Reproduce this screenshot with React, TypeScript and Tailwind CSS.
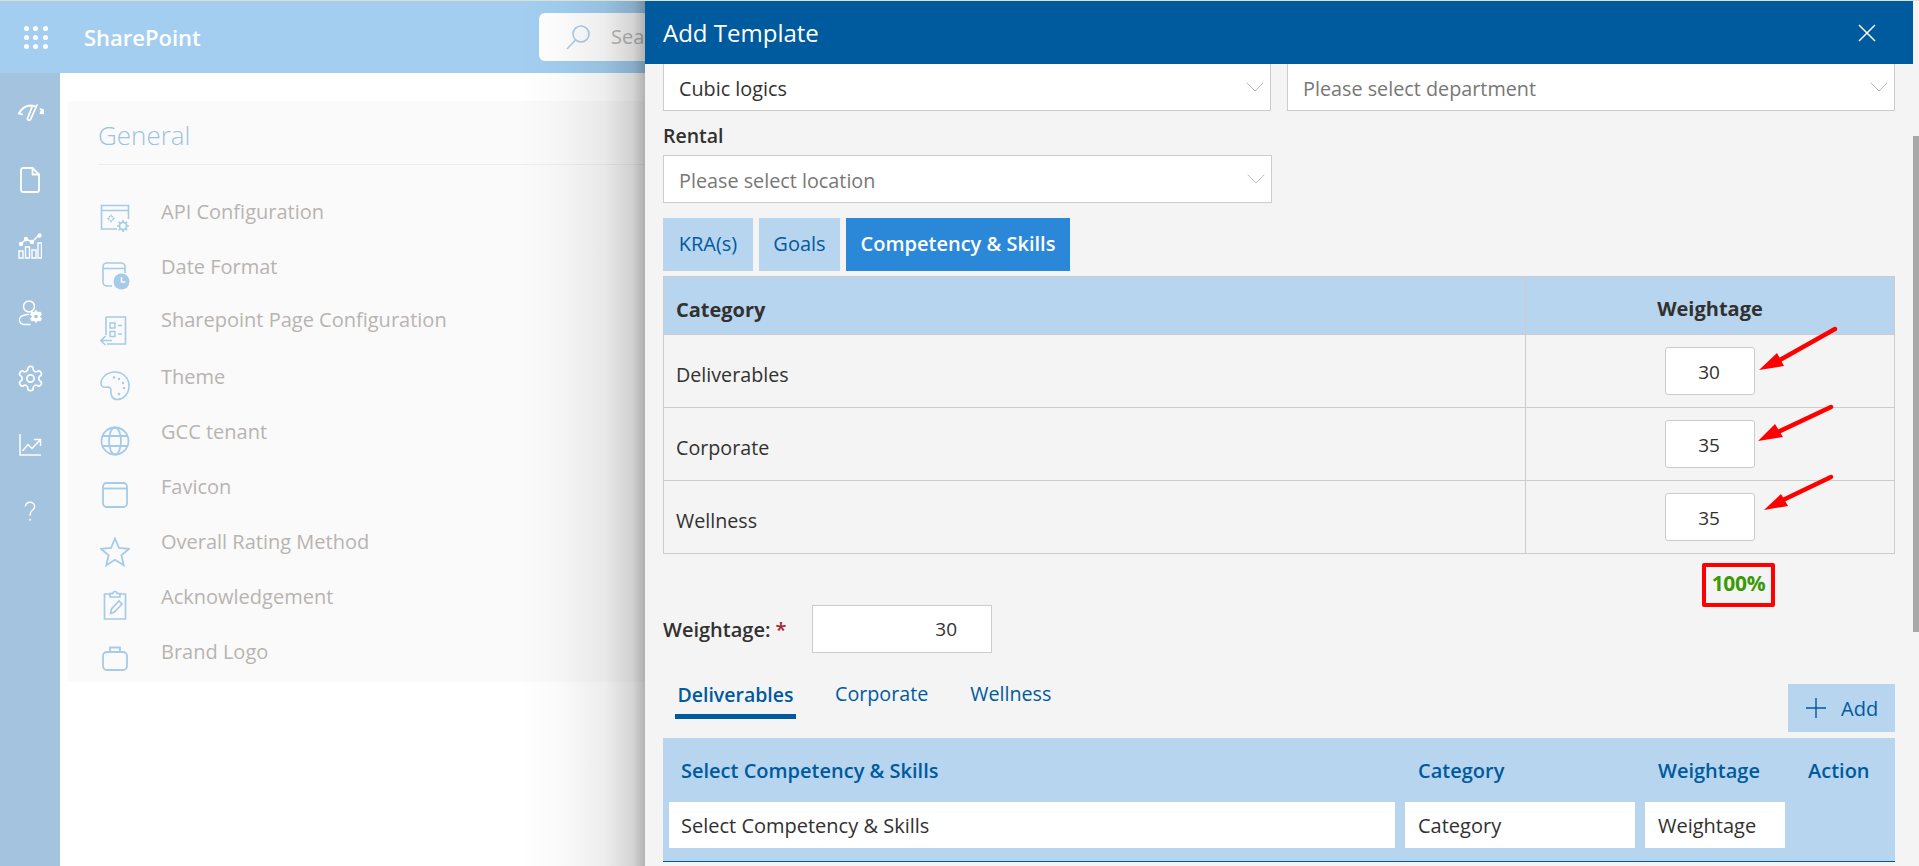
import React from "react";
import { ChevronDown } from "lucide-react";

const ic = { fill: "none", stroke: "#a5cbe8", strokeWidth: 1.6 };

function ItemIcon({ k }: { k: string }) {
  const common = { width: 30, height: 30, viewBox: "0 0 30 30", className: "shrink-0" };
  switch (k) {
    case "api":
      return (
        <svg {...common} {...ic}>
          <path d="M17 25H1.500V1.500h27V15M1.500 6.500h27" />
          <circle cx="11" cy="14.500" r="2.400" strokeWidth="1.400" strokeDasharray="2 .6" />
          <path d="M11 10.500v1.500M11 17v1.500M7 14.500h1.500M13.500 14.500H15" strokeWidth="1.200" />
          <circle cx="23" cy="22" r="3.600" strokeWidth="1.800" />
          <path d="M23 16v2.400M23 25.600V28M17 22h2.400M26.600 22H29M18.800 17.800l1.700 1.700M25.500 24.500l1.700 1.700M27.200 17.800l-1.700 1.700M20.500 24.500l-1.700 1.700" strokeWidth="1.600" />
        </svg>
      );
    case "date":
      return (
        <svg {...common} {...ic}>
          <path d="M12 25H7a4 4 0 0 1-4-4V6a4 4 0 0 1 4-4h14a4 4 0 0 1 4 4v6M3 7.500h22" />
          <circle cx="21.500" cy="20.500" r="8" fill="#a5cbe8" stroke="none" />
          <path d="M21.500 16v5h4" stroke="#fafafa" strokeWidth="1.500" />
        </svg>
      );
    case "page":
      return (
        <svg {...common} {...ic}>
          <path d="M6 1h19.500v27H7M6 1v18" />
          <path d="M10 7h5v5h-5zM10 15.500h5v5h-5zM18 9.500h4M18 18h4" strokeWidth="1.500" />
          <path d="M1 24.500h11M5.500 20l-4.500 4.500 4.500 4.500" />
        </svg>
      );
    case "theme":
      return (
        <svg {...common} {...ic}>
          <path d="M15 1C7 1 1 6.500 1 12.500c0 3 2.500 4 5 3.700 3-.3 5.500 0 5 4-.4 3.800 1 8.300 6 8.300 7 0 12-6.500 12-13.500C29 7 23 1 15 1z" />
          <g fill="#a5cbe8" stroke="none">
            <circle cx="14" cy="6.500" r="1.300" />
            <circle cx="19" cy="8" r="1.200" />
            <circle cx="23" cy="12" r="1.200" />
            <circle cx="24" cy="17" r="1.200" />
            <circle cx="19" cy="23" r="1.300" />
          </g>
        </svg>
      );
    case "globe":
      return (
        <svg {...common} {...ic} strokeWidth="1.800">
          <circle cx="15" cy="15" r="13.500" />
          <ellipse cx="15" cy="15" rx="6" ry="13.500" />
          <path d="M2.500 10h25M2.500 20h25" />
        </svg>
      );
    case "fav":
      return (
        <svg {...common} {...ic} strokeWidth="1.800">
          <rect x="3" y="3" width="24" height="24" rx="3.500" />
          <path d="M3 8.500h24" />
        </svg>
      );
    case "star":
      return (
        <svg {...common} {...ic} strokeWidth="1.800">
          <path d="M15 1.500l4 9.500 10 .8-7.600 6.500 2.300 10L15 22.800l-8.700 5.500 2.300-10L1 11.800l10-.8z" />
        </svg>
      );
    case "ack":
      return (
        <svg {...common} {...ic} strokeWidth="1.700">
          <path d="M10 4H4.500v25h21V4H20M10 7h10V3.500h-3a2 2 0 0 0-4 0h-3z" />
          <path d="M10.500 23.500l1-4.500 7.500-8 3 3-7.500 8z" />
        </svg>
      );
    default:
      return (
        <svg {...common} {...ic} strokeWidth="1.800">
          <rect x="3" y="8" width="24" height="18" rx="4" />
          <path d="M10 8V3.500h10V8" />
        </svg>
      );
  }
}

const items = [
  { t: "API Configuration", k: "api", h: "h-[55px]", m: "mt-[5px]" },
  { t: "Date Format", k: "date", h: "h-[53px]", m: "mt-[7px]" },
  { t: "Sharepoint Page Configuration", k: "page", h: "h-[57px]", m: "mt-[9px]" },
  { t: "Theme", k: "theme", h: "h-[55px]", m: "mt-[7px]" },
  { t: "GCC tenant", k: "globe", h: "h-[55px]", m: "mt-[7px]" },
  { t: "Favicon", k: "fav", h: "h-[55px]", m: "mt-[6px]" },
  { t: "Overall Rating Method", k: "star", h: "h-[55px]", m: "mt-[8px]" },
  { t: "Acknowledgement", k: "ack", h: "h-[55px]", m: "mt-[6px]" },
  { t: "Brand Logo", k: "brand", h: "h-[55px]", m: "mt-[5px]" },
];

function Rail() {
  const s = { fill: "none", stroke: "#fff", strokeWidth: 1.8, strokeLinecap: "round" as const, strokeLinejoin: "round" as const };
  return (
    <div className="flex w-[60px] shrink-0 flex-col items-center bg-[#a3c3de] pt-[25px]">
      <svg width="28" height="30" viewBox="0 0 28 30" {...s} className="mb-[39px]">
        <path d="M3 15.500C5.500 10.500 9.500 8 14 7.500c2 0 3.500 .2 5 .9M24.500 11c1.200 1.200 2 2.700 2.500 4.500" />
        <path d="M3 15.500l3 .9M26.500 11.500l-2 3.600h4z" />
        <path d="M21 7l-6.500 14.500c-.6 1.500-3.500 .8-3-1L16 9" />
      </svg>
      <svg width="20" height="26" viewBox="0 0 20 26" {...s} className="mb-[40px]">
        <path d="M3 1h9.500L19 7.500V23a2 2 0 0 1-2 2H3a2 2 0 0 1-2-2V3a2 2 0 0 1 2-2z" />
        <path d="M12.500 1v6.500H19" />
      </svg>
      <svg width="24" height="26" viewBox="0 0 24 26" {...s} strokeWidth="1.400" className="mb-[41px]">
        <path d="M1 18h4v7H1zM7.500 14h4v11h-4zM14 17h4v8h-4zM20 10h3.500v15H20z" strokeLinejoin="miter" />
        <path d="M3 11l5-5 6 3 7-7" />
        <circle cx="3" cy="11" r="1.500" fill="#fff" />
        <circle cx="8" cy="6" r="1.500" fill="#fff" />
        <circle cx="14" cy="9" r="1.500" fill="#fff" />
        <circle cx="21.500" cy="2.500" r="1.500" fill="#fff" />
      </svg>
      <svg width="25" height="26" viewBox="0 0 25 26" {...s} strokeWidth="1.500" className="mb-[38px]">
        <circle cx="11" cy="6.500" r="5.500" />
        <path d="M12 24.500H6.500a4.500 4.500 0 0 1-1-9 8 8 0 0 1 5-1" />
        <path d="M18 10.500l1.800 2 2.700-.3.900 2.500-1.800 1.800 1.800 1.800-.9 2.500-2.700-.3-1.800 2-1.800-2-2.700.3-.9-2.500 1.800-1.800-1.800-1.800.9-2.500 2.700.3z" fill="#fff" strokeWidth="1" />
        <circle cx="18" cy="16.500" r="1.800" fill="#a3c3de" stroke="none" />
      </svg>
      <svg width="29" height="29" viewBox="0 0 24 24" {...s} strokeWidth="1.400" className="mb-[40px]">
        <path d="M12.220 2h-.44a2 2 0 0 0-2 2v.18a2 2 0 0 1-1 1.730l-.43.25a2 2 0 0 1-2 0l-.15-.08a2 2 0 0 0-2.730.73l-.22.38a2 2 0 0 0 .73 2.730l.15.1a2 2 0 0 1 1 1.720v.51a2 2 0 0 1-1 1.740l-.15.090a2 2 0 0 0-.73 2.730l.22.38a2 2 0 0 0 2.730.73l.15-.08a2 2 0 0 1 2 0l.43.25a2 2 0 0 1 1 1.730V20a2 2 0 0 0 2 2h.44a2 2 0 0 0 2-2v-.18a2 2 0 0 1 1-1.730l.43-.25a2 2 0 0 1 2 0l.15.080a2 2 0 0 0 2.730-.73l.22-.39a2 2 0 0 0-.73-2.730l-.15-.08a2 2 0 0 1-1-1.740v-.5a2 2 0 0 1 1-1.740l.15-.09a2 2 0 0 0 .73-2.730l-.22-.38a2 2 0 0 0-2.730-.73l-.15.080a2 2 0 0 1-2 0l-.43-.25a2 2 0 0 1-1-1.730V4a2 2 0 0 0-2-2z" />
        <circle cx="12" cy="12" r="3" />
      </svg>
      <svg width="24" height="24" viewBox="0 0 24 24" fill="none" stroke="#fff" strokeWidth="1.500" className="mb-[43px]">
        <path d="M2 1v21h21" />
        <path d="M4.500 18l5.500-6.500 4 4 8-8.500M16 6.500h6.500V13" />
      </svg>
      <svg width="14" height="23" viewBox="0 0 18 26" fill="none" stroke="#fff" strokeWidth="1.800">
        <path d="M3 6.500C3.500 3 6 1.200 9 1.200c3.500 0 6 2.300 6 5.300 0 2.200-1.200 3.500-3 5-1.800 1.500-2.800 2.800-2.800 5.500v1.500" />
        <circle cx="9.200" cy="23.500" r="1.300" fill="#fff" stroke="none" />
      </svg>
    </div>
  );
}

function Background() {
  return (
    <div className="flex h-full flex-col">
      <div className="h-px shrink-0 bg-[#dce0cf]" />
      <div className="flex h-[72px] shrink-0 items-center bg-[#a3cef0]">
        <div className="ml-[24px] grid w-[24px] grid-cols-3 gap-[4px]">
          {Array.from({ length: 9 }).map((_, i) => (
            <span key={i} className="h-[5px] w-[5px] rounded-full bg-white" />
          ))}
        </div>
        <div className="ml-[36px] w-[455px] text-[22px] font-semibold text-white">SharePoint</div>
        <div className="flex h-[48px] w-[110px] items-center rounded-l-[6px] bg-white pl-[27px]">
          <svg width="24" height="25" viewBox="0 0 24 25" fill="none" stroke="#a9cdea" strokeWidth="1.600" className="shrink-0">
            <circle cx="15" cy="9" r="8" />
            <path d="M9.500 15L1 24" />
          </svg>
          <span className="ml-[21px] text-[20px] text-[#bdbab7]">Sea</span>
        </div>
      </div>
      <div className="flex min-h-0 flex-1">
        <Rail />
        <div className="flex-1 bg-white pl-[8px] pt-[28px]">
          <div className="h-[581px] bg-[#fafafa] px-[30px] pt-[18px]">
            <div className="h-[32px] text-[26px] font-light leading-[32px] text-[#9dc3e0]">General</div>
            <div className="mt-[13px] h-px bg-[#eeeeee]" />
            <div className="mt-[34px] flex flex-col">
              {items.map((it) => (
                <div key={it.t} className={`flex items-start ${it.h}`}>
                  <div className={`ml-[2px] w-[61px] shrink-0 ${it.m}`}>
                    <ItemIcon k={it.k} />
                  </div>
                  <span className="-mt-px text-[20px] leading-[27px] text-[#b8b4b1]">{it.t}</span>
                </div>
              ))}
            </div>
          </div>
        </div>
      </div>
    </div>
  );
}

function Select({ text, placeholder, className }: { text: string; placeholder?: boolean; className: string }) {
  return (
    <div className={`flex items-center justify-between border border-[#cccccc] bg-white pl-[15px] ${className}`}>
      <span className={`pt-[3px] text-[19.8px] ${placeholder ? "text-[#797775]" : "text-[#323130]"}`}>{text}</span>
      <ChevronDown size={32} strokeWidth={0.7} color="#b8b8b8" className="-mr-px" />
    </div>
  );
}

function ValueBox({ v }: { v: string }) {
  return (
    <div className="ml-auto mr-[139px] flex h-[48px] w-[90px] items-center justify-center rounded-[3px] border border-[#cccccc] bg-white pr-[2px] pt-[3px] text-[19px] text-[#323130]">
      {v}
    </div>
  );
}

function Panel() {
  return (
    <div className="absolute bottom-0 left-[645px] right-0 top-px flex flex-col bg-[#f4f4f4]">
      <div className="pointer-events-none absolute bottom-0 right-full top-0 w-[125px] bg-[linear-gradient(to_left,rgba(0,0,0,0.3)_0,rgba(0,0,0,0.17)_12px,rgba(0,0,0,0.07)_40px,rgba(0,0,0,0.02)_85px,rgba(0,0,0,0)_125px)]" />
      <div className="mr-[6px] flex h-[63px] shrink-0 items-center justify-between bg-[#005a9e] pl-[18px] pr-[37px]">
        <span className="text-[24px] text-white">Add Template</span>
        <svg width="18" height="18" viewBox="0 0 18 18" stroke="#fff" strokeWidth="1.500">
          <path d="M1 1l16 16M17 1L1 17" />
        </svg>
      </div>
      <div className="absolute right-0 top-[135px] h-[496px] w-[6px] bg-[#a8a8a8]" />
      <div className="min-h-0 flex-1 overflow-hidden pl-[18px] pr-[24px]">
        <div className="grid grid-cols-2 gap-x-[16px]">
          <Select text="Cubic logics" className="h-[48px] -mt-px" />
          <Select text="Please select department" placeholder className="h-[48px] -mt-px" />
        </div>
        <div className="flex h-[44px] items-center pt-[5px] text-[19.5px] font-semibold text-[#323130]">Rental</div>
        <Select text="Please select location" placeholder className="h-[48px] w-[609px]" />
        <div className="mt-[15px] flex h-[53px] gap-[6px] text-[20px]">
          <div className="flex w-[90px] items-center justify-center bg-[#b7d5ee] pb-[1px] text-[#005a9e]">KRA(s)</div>
          <div className="flex w-[81px] items-center justify-center bg-[#b7d5ee] pb-[1px] text-[#005a9e]">Goals</div>
          <div className="flex w-[224px] items-center justify-center bg-[#2b88d8] pb-[1px] font-semibold text-white">Competency &amp; Skills</div>
        </div>
        <table className="mt-[5px] w-full table-fixed border-collapse text-[19.7px] text-[#323130]">
          <thead>
            <tr className="h-[58px] bg-[#b7d5ee]">
              <th className="border border-[#cccccc] pl-[12px] pt-[8px] text-left text-[20px] font-bold">Category</th>
              <th className="w-[369px] border border-[#cccccc] pt-[6px] text-center text-[20px] font-bold">Weightage</th>
            </tr>
          </thead>
          <tbody>
            {[
              ["Deliverables", "30"],
              ["Corporate", "35"],
              ["Wellness", "35"],
            ].map(([c, v]) => (
              <tr key={c} className="h-[73px]">
                <td className="border border-[#cccccc] pl-[12px] pt-[8px]">{c}</td>
                <td className="border border-[#cccccc]">
                  <ValueBox v={v} />
                </td>
              </tr>
            ))}
          </tbody>
        </table>
        <div className="ml-[1039px] mt-[9px] flex h-[44px] w-[73px] items-center justify-center rounded-[2px] border-[4px] border-[#ff0000] pb-[2px] text-[21px] font-bold tracking-[-0.3px] text-[#3a9a05]">
          100%
        </div>
        <div className="-mt-[2px] flex h-[48px] items-center">
          <span className="w-[149px] pt-[2px] text-[20px] font-semibold text-[#323130]">
            Weightage: <span className="text-[#a4262c]">*</span>
          </span>
          <div className="flex h-[48px] w-[180px] items-center justify-end border border-[#cccccc] bg-white pr-[34px] pt-[1px] text-[19px] text-[#323130]">30</div>
        </div>
        <div className="flex h-[79px] items-end justify-between">
          <div className="mb-[13px] flex items-end pl-[12px] text-[19.7px] text-[#005a9e]">
            <div className="w-[121px] border-b-[5px] border-[#005a9e] pb-[5px] text-center text-[19.5px] font-semibold">Deliverables</div>
            <div className="ml-[39px] pb-[10px]">Corporate</div>
            <div className="ml-[42px] pb-[10px]">Wellness</div>
          </div>
          <div className="flex h-[48px] w-[107px] items-center bg-[#b7d5ee] pl-[18px] text-[20px] text-[#005a9e]">
            <svg width="20" height="20" viewBox="0 0 20 20" stroke="#005a9e" strokeWidth="1.400">
              <path d="M10 0v20M0 10h20" />
            </svg>
            <span className="ml-[15px] pt-[2px]">Add</span>
          </div>
        </div>
        <div className="mt-[6px] h-[124px] border-b border-[#005a9e] bg-[#b7d5ee] pl-[6px]">
          <div className="grid h-[64px] grid-cols-[726px_230px_140px_1fr] items-center gap-x-[10px] pt-[2px] text-[20px] font-semibold text-[#005a9e]">
            <div className="pl-[12px]">Select Competency &amp; Skills</div>
            <div className="pl-[13px]">Category</div>
            <div className="pl-[13px]">Weightage</div>
            <div className="pl-[13px]">Action</div>
          </div>
          <div className="grid h-[46px] grid-cols-[726px_230px_140px] gap-x-[10px] text-[20px] text-[#323130]">
            <div className="flex items-center bg-white pl-[12px] pt-[2px]">Select Competency &amp; Skills</div>
            <div className="flex items-center bg-white pl-[13px] pt-[2px]">Category</div>
            <div className="flex items-center bg-white pl-[13px] pt-[2px]">Weightage</div>
          </div>
        </div>
      </div>
    </div>
  );
}

function Arrows() {
  return (
    <svg className="pointer-events-none absolute left-0 top-0" width="1919" height="866" viewBox="0 0 1919 866" fill="#ff0000" stroke="none">
      <path d="M1835 329L1778 361" stroke="#ff0000" strokeWidth="4.500" strokeLinecap="round" />
      <polygon points="1759,370 1777,353 1784,366" />
      <path d="M1831 407L1776 433" stroke="#ff0000" strokeWidth="4.500" strokeLinecap="round" />
      <polygon points="1758,441 1775,424 1783,437" />
      <path d="M1831 477L1783 500" stroke="#ff0000" strokeWidth="4.500" strokeLinecap="round" />
      <polygon points="1764,510 1781,494 1788,506" />
    </svg>
  );
}

export default function App() {
  return (
    <div className="relative h-[866px] w-full overflow-hidden bg-white font-['Open_Sans','Noto_Sans',sans-serif]">
      <Background />
      <Panel />
      <Arrows />
    </div>
  );
}
